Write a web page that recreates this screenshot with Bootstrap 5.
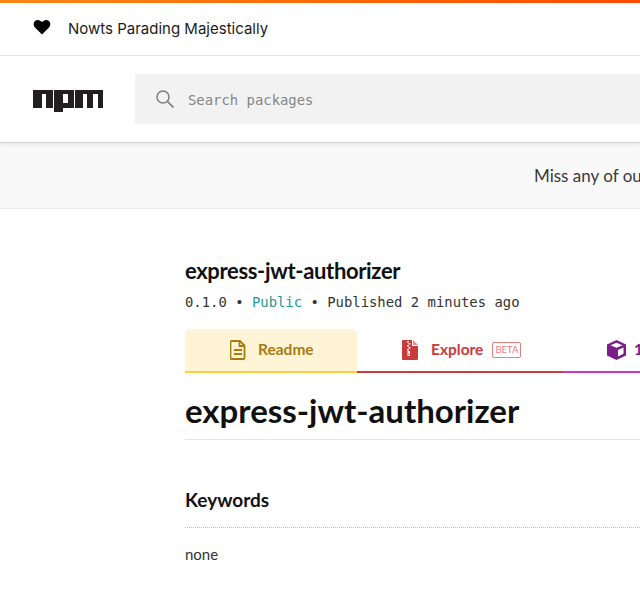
<!DOCTYPE html>
<html lang="en"><head><meta charset="utf-8"><title>express-jwt-authorizer</title>
<link href="https://cdn.jsdelivr.net/npm/bootstrap@5.3.0/dist/css/bootstrap.min.css" rel="stylesheet">
<style>
html,body{height:616px;overflow:hidden;background:#fff}
body{font-family:"Lato","Noto Sans",sans-serif;color:#111}
.page-box{width:1200px}
.grad-strip{height:3px;width:640px;background:linear-gradient(90deg,#fb8817 0%,#ff4b01 100%)}
.slogan-row{height:53px;width:640px;border-bottom:1px solid #e5e5e5;padding-left:33px}
.heart-mark{margin-bottom:5px}
.slogan-text{font-family:"Inter",sans-serif;font-size:15px;color:#1b1b1b;margin-left:17px}
.search-row{height:87px;width:640px;border-bottom:1px solid #d5d5d5;box-shadow:0 2px 4px rgba(0,0,0,.08);padding-left:33px;position:relative}
.npm-logo{margin-top:4px}
.search-box{width:505px;height:50px;background:#f2f2f2;margin-left:32px;padding-left:21px}
.search-hint{font-family:"DejaVu Sans Mono",monospace;font-size:13.9px;color:#858585;margin-left:14px;padding-top:3px}
.miss-banner{height:66px;width:640px;background:#f9f9f9;border-bottom:1px solid #ececec;padding-left:534px;padding-top:1px;font-size:17px;color:#3a3a3a;white-space:nowrap;overflow:hidden}
.pkg-main{margin-left:185px;width:455px;overflow:hidden}
.pkg-title{font-size:22px;font-weight:700;color:#111;letter-spacing:-.35px;margin:48px 0 0;line-height:27px;white-space:nowrap}
.pkg-meta{font-family:"DejaVu Sans Mono",monospace;font-size:13.9px;color:#333;margin-top:8px;line-height:20px;white-space:nowrap}
.pkg-public{color:#1c9c8a}
.tab-row{margin-top:17px;height:44px;width:700px}
.tab-item{height:44px;font-weight:700;font-size:15.5px;white-space:nowrap}
.tab-readme{width:172px;background:#fff4d6;border-bottom:2px solid #ffcd3a;border-radius:5px 5px 0 0;color:#a87b10;padding-left:45px}
.tab-explore{width:206px;border-bottom:2px solid #c93a3a;color:#c93a3a;padding-left:45px}
.tab-deps{width:322px;border-bottom:2px solid #c836c8;color:#7a1f8a;padding-left:44px}
.explore-label{margin-left:5px}
.beta-tag{font-size:9.5px;font-weight:400;border:1px solid #e57e7e;color:#e57e7e;border-radius:2px;padding:0 2px;line-height:14px;margin-left:9px}
.read-title{font-size:33px;font-weight:700;color:#111;margin:17px 0 0;line-height:40px;padding-bottom:9px;border-bottom:1px solid #e4e4e4;white-space:nowrap}
.kw-title{font-size:19px;font-weight:700;color:#111;margin:47px 0 0;line-height:26px;padding-bottom:14px;border-bottom:1px dotted #bbb}
.kw-none{font-size:15px;color:#333;margin-top:16px;line-height:20px}
</style></head>
<body>
<div class="page-box">
<div class="grad-strip"></div>
<div class="slogan-row d-flex align-items-center">
<svg class="heart-mark" width="18" height="16" viewBox="0 0 18 16" aria-hidden="true"><path d="M9 15.500 2 8.600C.2 6.700.2 3.600 2 1.900 3.900.3 6.600.6 9 3c2.400-2.400 5.100-2.700 7-1.100 1.800 1.700 1.800 4.800 0 6.700z" fill="#000"/></svg>
<span class="slogan-text">Nowts Parading Majestically</span>
</div>
<div class="search-row d-flex align-items-center">
<svg class="npm-logo" width="70" height="22" viewBox="0 0 70 22" aria-hidden="true"><path fill="#231f20" fill-rule="evenodd" d="M0 0h20v18h-7V4H9v14H0zM21 0h20v18H30v4h-9zM30 4v9h5V4zM42 0h28v18h-5V4h-5v14h-6V4h-4v14h-8z"/></svg>
<div class="search-box d-flex align-items-center">
<svg width="18" height="18" viewBox="0 0 18 18" fill="none" stroke="#7d7d7d" aria-hidden="true"><circle cx="7" cy="7" r="6" stroke-width="1.500"/><path d="m11.500 11.500 6 6" stroke-width="1.700"/></svg>
<span class="search-hint">Search packages</span>
</div>
</div>
<div class="miss-banner d-flex align-items-center">Miss any of our Open RFC calls?</div>
<main class="pkg-main">
<h2 class="pkg-title">express-jwt-authorizer</h2>
<div class="pkg-meta">0.1.0 • <span class="pkg-public">Public</span> • Published 2 minutes ago</div>
<div class="tab-row d-flex">
<div class="tab-item tab-readme d-flex align-items-center">
<svg width="16" height="20" viewBox="0 0 16 20" class="me-2" fill="none" stroke="#a87b10" stroke-width="1.800" aria-hidden="true"><path d="M1.500 1h8.500l4.500 4.500V18a1 1 0 0 1-1 1h-12a1 1 0 0 1-1-1V2a1 1 0 0 1 1-1z"/><path d="M9.500 1v5h5M4 10h8M4 14h8"/></svg>
<span class="ms-1">Readme</span></div>
<div class="tab-item tab-explore d-flex align-items-center">
<svg width="16" height="20" viewBox="0 0 16 20" class="me-2" aria-hidden="true"><path fill="#c93a3a" d="M0 1a1 1 0 0 1 1-1h9v6h6v13a1 1 0 0 1-1 1H1a1 1 0 0 1-1-1z"/><path fill="#e58a8a" d="M11 0l5 5h-5z"/><path fill="#fff" d="M5 1h2v1.500H5zM6.500 3h2v1.500h-2zM5 5h2v1.500H5zM6.500 7h2v1.500h-2zM5 9h2v1.500H5zM5.500 11h2.500v5H5.500z"/><path fill="#c93a3a" d="M6.300 13.500h1v1.500h-1z"/></svg>
<span class="explore-label">Explore</span><span class="beta-tag">BETA</span></div>
<div class="tab-item tab-deps d-flex align-items-center">
<svg width="19" height="20" viewBox="0 0 19 20" class="me-2" aria-hidden="true"><path fill="#7a1f8a" d="M9.500 0 19 4.500v11L9.500 20 0 15.500v-11z"/><path fill="#fff" d="M9.500 2.800 15.500 5.200 9.500 7.800 3.500 5.200z"/><path fill="#fff" d="M11 10 16.500 7.600v6.200L11 16.500z"/></svg>
<span>1 Dependency</span></div>
</div>
<h1 class="read-title">express-jwt-authorizer</h1>
<h3 class="kw-title">Keywords</h3>
<p class="kw-none">none</p>
</main>
</div>
</body></html>
